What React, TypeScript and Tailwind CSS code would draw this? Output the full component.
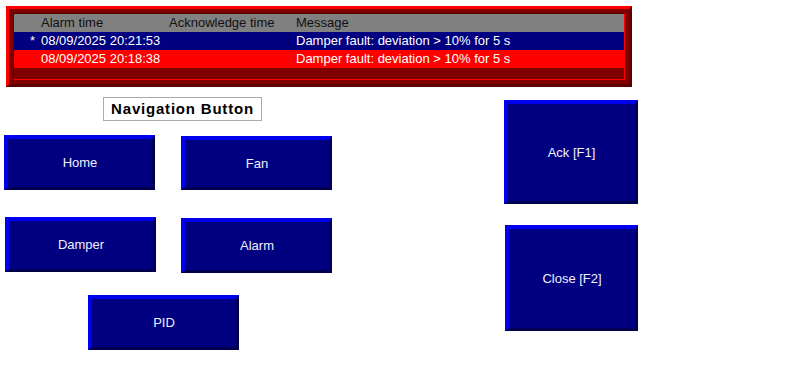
import React from "react";

type AlarmRow = {
  mark: string;
  time: string;
  ack: string;
  message: string;
  bg: string;
};

const alarms: AlarmRow[] = [
  {
    mark: "*",
    time: "08/09/2025 20:21:53",
    ack: "",
    message: "Damper fault: deviation > 10% for 5 s",
    bg: "bg-[#000080]",
  },
  {
    mark: "",
    time: "08/09/2025 20:18:38",
    ack: "",
    message: "Damper fault: deviation > 10% for 5 s",
    bg: "bg-[#ff0000]",
  },
];

function HmiButton({
  label,
  className,
}: {
  label: string;
  className: string;
}) {
  return (
    <button
      className={`flex items-center justify-center border-t-4 border-l-4 border-r-[3px] border-b-[3px] border-t-[#0000ee] border-l-[#0000ee] border-r-[#00004e] border-b-[#00004e] bg-[#000080] text-[13px] text-[#f0f0ff] ${className}`}
    >
      {label}
    </button>
  );
}

function AlarmBanner() {
  return (
    <section className="ml-[6px] mt-[6px] h-[81px] w-[626px] border-[3px] border-t-[#ff0000] border-l-[#ff0000] border-r-[#5c0000] border-b-[#5c0000] bg-[#800000] p-[4px]">
      <div className="flex h-full flex-col border border-t-[#500000] border-l-[#500000] border-r-[#ff0000] border-b-[#ff0000] bg-[#800000] text-[13px] leading-[18px]">
        <div className="flex h-[18px] bg-[#808080] text-[#111]">
          <span className="w-[27px]" />
          <span className="w-[128px]">Alarm time</span>
          <span className="w-[127px]">Acknowledge time</span>
          <span>Message</span>
        </div>
        {alarms.map((a, i) => (
          <div key={i} className={`flex h-[18px] text-white ${a.bg}`}>
            <span className="w-[27px] pl-[16px]">{a.mark}</span>
            <span className="w-[128px]">{a.time}</span>
            <span className="w-[127px]">{a.ack}</span>
            <span>{a.message}</span>
          </div>
        ))}
      </div>
    </section>
  );
}

export default function App() {
  return (
    <div className="h-[382px] w-[792px] overflow-hidden bg-white font-['Liberation_Sans',Arial,sans-serif]">
      <AlarmBanner />
      <div className="flex">
        {/* navigation */}
        <div className="flex w-[332px] flex-col">
          <div className="ml-[103px] mt-[10px] flex h-[24px] w-[159px] items-center justify-center border border-[#aaaaaa] text-[15px] font-bold tracking-[0.8px] text-black">
            Navigation Button
          </div>
          <div className="mt-[14px] flex gap-[26px]">
            <HmiButton label="Home" className="ml-[4px] h-[55px] w-[151px]" />
            <HmiButton label="Fan" className="mt-[1px] h-[54px] w-[151px]" />
          </div>
          <div className="mt-[27px] flex gap-[25px]">
            <HmiButton label="Damper" className="ml-[5px] h-[55px] w-[151px]" />
            <HmiButton label="Alarm" className="mt-[1px] h-[55px] w-[151px]" />
          </div>
          <HmiButton label="PID" className="ml-[88px] mt-[22px] h-[55px] w-[151px]" />
        </div>
        {/* acknowledge */}
        <div className="ml-[172px] flex flex-col">
          <HmiButton label="Ack [F1]" className="mt-[13px] h-[104px] w-[134px]" />
          <HmiButton label="Close [F2]" className="ml-[1px] mt-[21px] h-[106px] w-[133px]" />
        </div>
      </div>
    </div>
  );
}
